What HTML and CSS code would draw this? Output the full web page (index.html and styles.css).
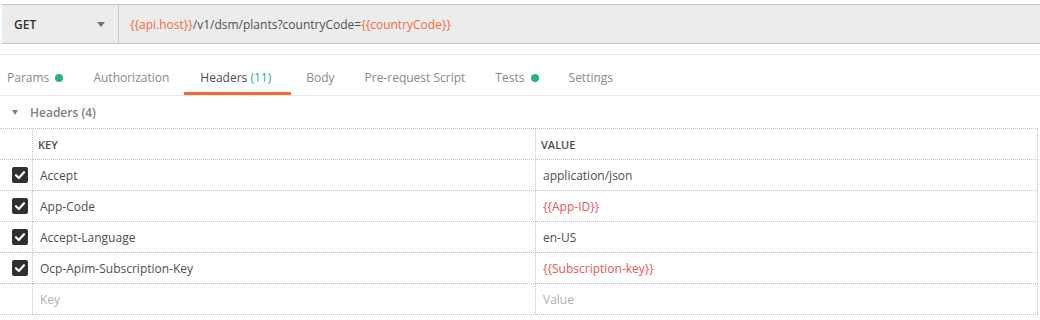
FILE: index.html
```html
<!DOCTYPE html>
<html lang="en">
<head>
    <meta charset="UTF-8">
    <title>Request - Headers</title>
    <link rel="stylesheet" href="styles.css">
</head>
<body>
    <div class="url-bar">
        <div class="method">
            <span>GET</span>
            <span class="caret"></span>
        </div>
        <div class="url">
            <span class="var">{{api.host}}</span>/v1/dsm/plants?countryCode=<span class="var">{{countryCode}}</span>
        </div>
    </div>

    <div class="tabs">
        <div class="tab">Params <span class="dot"></span></div>
        <div class="tab">Authorization</div>
        <div class="tab active">Headers <span class="count">(11)</span></div>
        <div class="tab">Body</div>
        <div class="tab">Pre-request Script</div>
        <div class="tab">Tests <span class="dot"></span></div>
        <div class="tab">Settings</div>
    </div>

    <div class="section-title">
        <span class="toggle"></span>
        Headers (4)
    </div>

    <div class="kv-table">
        <div class="cell"></div>
        <div class="cell head">KEY</div>
        <div class="cell head">VALUE</div>

        <div class="cell check"><span class="checkbox"><svg width="16" height="16" viewBox="0 0 16 16"><polyline points="4,8.2 6.8,11 12,5.2" fill="none" stroke="#fff" stroke-width="2.2" stroke-linecap="round" stroke-linejoin="round"/></svg></span></div>
        <div class="cell">Accept</div>
        <div class="cell">application/json</div>

        <div class="cell check"><span class="checkbox"><svg width="16" height="16" viewBox="0 0 16 16"><polyline points="4,8.2 6.8,11 12,5.2" fill="none" stroke="#fff" stroke-width="2.2" stroke-linecap="round" stroke-linejoin="round"/></svg></span></div>
        <div class="cell">App-Code</div>
        <div class="cell var-red">{{App-ID}}</div>

        <div class="cell check"><span class="checkbox"><svg width="16" height="16" viewBox="0 0 16 16"><polyline points="4,8.2 6.8,11 12,5.2" fill="none" stroke="#fff" stroke-width="2.2" stroke-linecap="round" stroke-linejoin="round"/></svg></span></div>
        <div class="cell">Accept-Language</div>
        <div class="cell">en-US</div>

        <div class="cell check"><span class="checkbox"><svg width="16" height="16" viewBox="0 0 16 16"><polyline points="4,8.2 6.8,11 12,5.2" fill="none" stroke="#fff" stroke-width="2.2" stroke-linecap="round" stroke-linejoin="round"/></svg></span></div>
        <div class="cell">Ocp-Apim-Subscription-Key</div>
        <div class="cell var-red">{{Subscription-key}}</div>

        <div class="cell"></div>
        <div class="cell placeholder">Key</div>
        <div class="cell placeholder">Value</div>
    </div>
</body>
</html>
```

FILE: styles.css
```css
body {
    margin: 0;
    background: #fff;
    font-family: "Open Sans", "Noto Sans", sans-serif;
    font-size: 12px;
    color: #505050;
}

.url-bar {
    display: flex;
    height: 38px;
    margin: 4px 0 0 2px;
    border-top: 1px solid #c8c8c8;
    border-bottom: 1px solid #c8c8c8;
    background: #ececec;
}
.method {
    width: 104px;
    padding: 0 0 0 12px;
    display: flex;
    align-items: center;
    justify-content: space-between;
    border-right: 1px solid #c8c8c8;
    font-size: 12px;
    font-weight: 600;
    color: #333;
}
.caret {
    width: 0;
    height: 0;
    margin-right: 13px;
    border-left: 4px solid transparent;
    border-right: 4px solid transparent;
    border-top: 5px solid #707070;
}
.url {
    display: flex;
    align-items: center;
    padding-left: 11px;
    font-size: 12px;
    color: #505050;
    white-space: pre;
}
.var {
    color: #f26b3a;
}

.tabs {
    display: flex;
    height: 40px;
    margin-top: 10px;
    border-top: 1px solid #e8e8e8;
    border-bottom: 1px solid #e8e8e8;
}
.tab {
    display: flex;
    align-items: center;
    padding: 8px 15px 0;
    border-bottom: 3px solid transparent;
    color: #8a8a8a;
    white-space: pre;
}
.tab:first-child {
    padding-left: 7px;
}
.tab.active {
    padding: 8px 20px 0 16px;
    border-bottom-color: #f26b3a;
    color: #505050;
}
.count {
    color: #26b47f;
}
.dot {
    width: 8px;
    height: 8px;
    margin-left: 3px;
    border-radius: 50%;
    background: #26b47f;
}

.section-title {
    display: flex;
    align-items: center;
    height: 32px;
    padding-left: 12px;
    font-weight: 600;
    color: #808080;
}
.toggle {
    width: 0;
    height: 0;
    margin-right: 12px;
    border-left: 3.5px solid transparent;
    border-right: 3.5px solid transparent;
    border-top: 5px solid #808080;
}

.kv-table {
    display: grid;
    grid-template-columns: 33px 503px 502px;
    grid-auto-rows: 31px;
    width: 1038px;
    border-top: 1px dotted #c4c4c4;
}
.cell {
    display: flex;
    align-items: center;
    padding-left: 7px;
    border-bottom: 1px dotted #c4c4c4;
    border-right: 1px dotted #c4c4c4;
    white-space: nowrap;
}
.cell:nth-child(3n+1) {
    padding-left: 0;
}
.cell.head {
    padding-left: 5px;
    font-size: 11px;
    font-weight: 600;
    color: #505050;
}
.cell.check {
    padding-left: 12px;
}
.checkbox {
    display: block;
    width: 16px;
    height: 16px;
    border-radius: 2px;
    background: #303030;
}
.checkbox svg {
    display: block;
}
.var-red {
    color: #ee5656;
}
.placeholder {
    color: #b0b0b0;
}
```
